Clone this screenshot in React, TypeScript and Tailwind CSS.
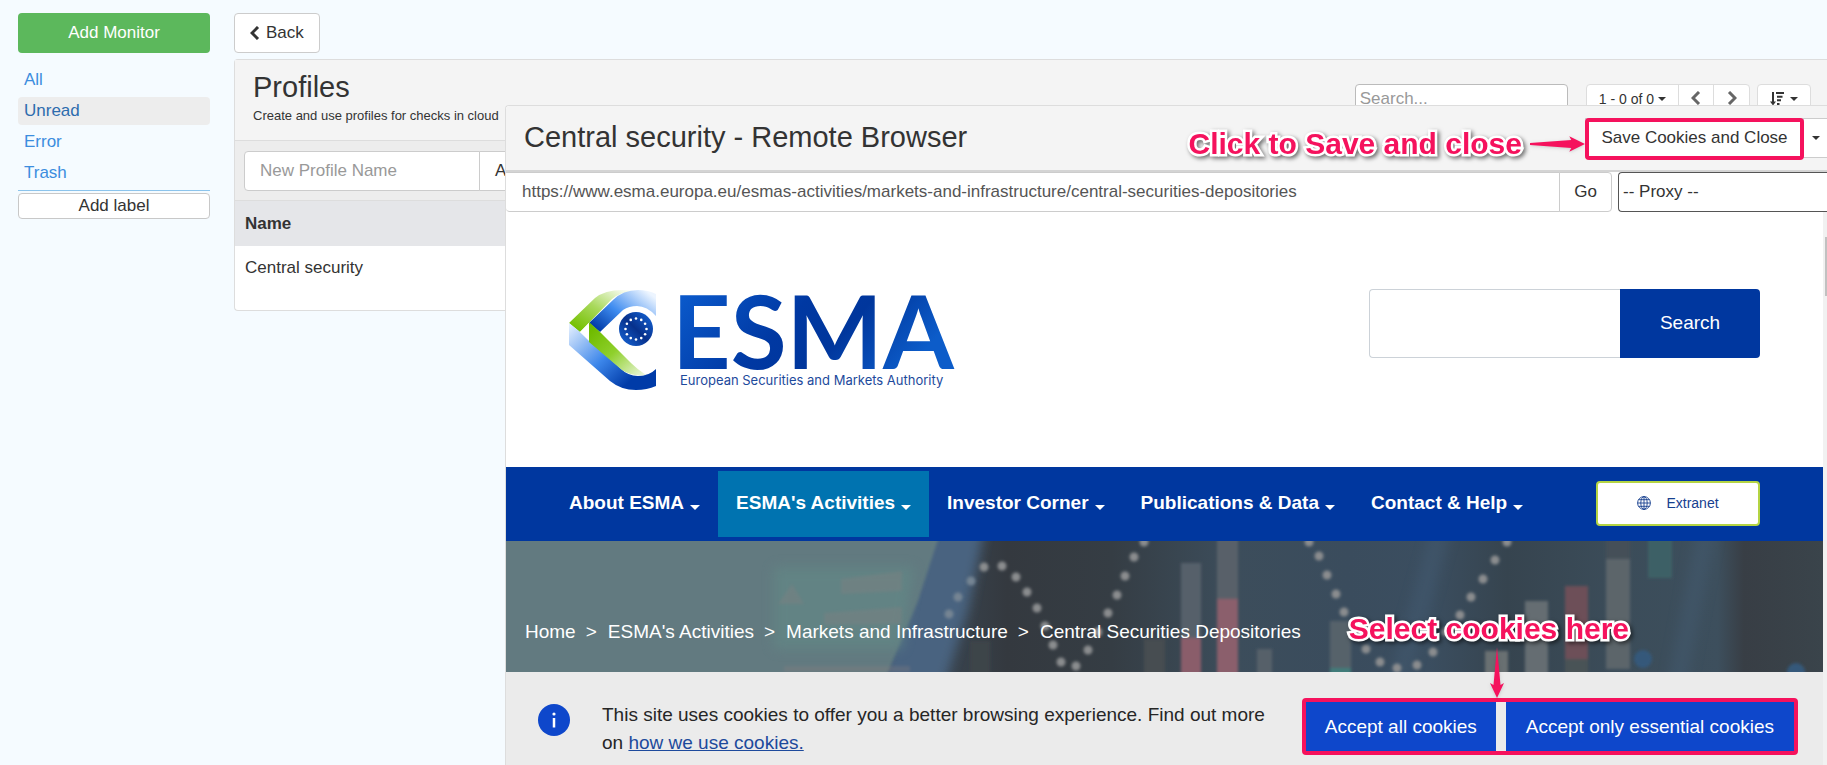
import type { ReactNode } from 'react'

const LABELS = [{ name: 'All' }, { name: 'Unread', active: true }, { name: 'Error' }, { name: 'Trash' }]

const NAV = [
  { label: 'About ESMA' },
  { label: "ESMA's Activities", active: true },
  { label: 'Investor Corner' },
  { label: 'Publications & Data' },
  { label: 'Contact & Help' },
]

const CRUMBS = ['Home', "ESMA's Activities", 'Markets and Infrastructure', 'Central Securities Depositories']

// Candlesticks behind the breadcrumb
const BARS = [
  { x: 464, y: 100, w: 20, h: 40, fill: '#3d4548' },
  { x: 638, y: 98, w: 21, h: 40, fill: '#474d51' },
  { x: 675, y: 22, w: 20, h: 75, fill: '#56616a' },
  { x: 675, y: 97, w: 20, h: 40, fill: '#8a5d6b' },
  { x: 711, y: -5, w: 21, h: 63, fill: '#586169' },
  { x: 711, y: 58, w: 21, h: 80, fill: '#8b5e6c' },
  { x: 751, y: 108, w: 15, h: 40, fill: '#566169' },
  { x: 824, y: 80, w: 21, h: 47, fill: '#56626a' },
  { x: 824, y: 127, w: 21, h: 10, fill: '#3f7c79' },
  { x: 979, y: 110, w: 23, h: 30, fill: '#696f72' },
  { x: 1019, y: 60, w: 23, h: 80, fill: '#656d72' },
  { x: 1059, y: 118, w: 23, h: 20, fill: '#485257' },
  { x: 1059, y: 45, w: 23, h: 73, fill: '#6d5059' },
  { x: 1100, y: -5, w: 24, h: 23, fill: '#445059' },
  { x: 1100, y: 18, w: 24, h: 110, fill: '#5c656a' },
  { x: 1142, y: -5, w: 24, h: 42, fill: '#3c6066' },
]

const DOTS = [
  [443, 73], [452, 56], [465, 40], [478, 26], [496, 25], [510, 36], [521, 51], [531, 67], [539, 85], [547, 104],
  [555, 121], [570, 125], [582, 109], [592, 91], [602, 72], [611, 54], [619, 35], [628, 16], [638, 1],
  [803, 1], [813, 15], [821, 34], [830, 53], [838, 71], [848, 91], [860, 108], [874, 121], [891, 127], [911, 124],
  [927, 111], [940, 91], [954, 74], [965, 56], [977, 38], [989, 19], [1001, 1],
]

const STARS = Array.from({ length: 12 }, (_, i) => (i * Math.PI) / 6)

function Caret({ className = 'w-2' }: { className?: string }) {
  return (
    <svg viewBox="0 0 8 4" className={`shrink-0 ${className}`} aria-hidden="true">
      <path d="M0 0h8L4 4z" fill="currentColor" />
    </svg>
  )
}

function Chevron({ right = false }: { right?: boolean }) {
  return (
    <svg width="10" height="14" viewBox="0 0 10 14" className="shrink-0" aria-hidden="true">
      <path d={right ? 'M2 1l6 6-6 6' : 'M8 1L2 7l6 6'} fill="none" stroke="currentColor" strokeWidth="3" />
    </svg>
  )
}

function SortIcon() {
  return (
    <svg width="14" height="14" viewBox="0 0 14 14" fill="none" stroke="currentColor" aria-hidden="true">
      <path d="M3 0v12" strokeWidth="2" />
      <path d="M0 9.500l3 4 3-4z" fill="currentColor" stroke="none" />
      <path d="M6 1h8M7 4.700h5.500M7 8.300h4M7 12h2.500" strokeWidth="2" />
    </svg>
  )
}

function GlobeIcon() {
  return (
    <svg width="14" height="14" viewBox="0 0 14 14" fill="none" stroke="currentColor" strokeWidth="0.9" aria-hidden="true">
      <circle cx="7" cy="7" r="6.400" />
      <ellipse cx="7" cy="7" rx="3.200" ry="6.400" />
      <path d="M7 0.600v12.800M0.600 7h12.800M1.500 3.700h11M1.500 10.300h11" />
    </svg>
  )
}

function EsmaLogo() {
  return (
    <svg width="390" height="104" viewBox="0 0 390 104" aria-label="ESMA" role="img" className="shrink-0 overflow-visible">
      <defs>
        <linearGradient id="word" x1="0" y1="0" x2="1" y2="0.4">
          <stop offset="0" stopColor="#0d62d6" />
          <stop offset="0.5" stopColor="#0038a2" />
          <stop offset="0.7" stopColor="#00369c" />
          <stop offset="1" stopColor="#0c5cc9" />
        </linearGradient>
        <linearGradient id="greenTop" x1="0" y1="1" x2="1" y2="0">
          <stop offset="0.1" stopColor="#74c000" />
          <stop offset="0.5" stopColor="#a9d95c" />
          <stop offset="0.9" stopColor="#f4faea" />
        </linearGradient>
        <linearGradient id="greenLow" x1="0" y1="0" x2="1" y2="1">
          <stop offset="0.1" stopColor="#6fbb00" />
          <stop offset="0.5" stopColor="#8fd02c" />
          <stop offset="1" stopColor="#f0f8e4" />
        </linearGradient>
        <linearGradient id="blueTop" x1="0" y1="1" x2="1" y2="0.2">
          <stop offset="0.1" stopColor="#003aa6" />
          <stop offset="0.5" stopColor="#3f8cf0" />
          <stop offset="1" stopColor="#edf5ff" />
        </linearGradient>
        <linearGradient id="blueLow" x1="0" y1="0" x2="1" y2="0.8">
          <stop offset="0" stopColor="#eaf3ff" />
          <stop offset="0.5" stopColor="#3c86ea" />
          <stop offset="0.85" stopColor="#003ba8" />
        </linearGradient>
        <linearGradient id="iris" x1="0" y1="1" x2="1" y2="0">
          <stop offset="0" stopColor="#1769dd" />
          <stop offset="0.5" stopColor="#07318c" />
          <stop offset="1" stopColor="#1668dc" />
        </linearGradient>
      </defs>
      <path d="M1 34L27 9Q37 1 54 1L66 2Q52 3 44 10L12 43z" fill="url(#greenTop)" />
      <path d="M21 34L45 11Q55 1 70 1Q80 1 88 5V27Q79 17 69 17Q61 17 55 21L32 43z" fill="url(#blueTop)" />
      <path d="M1 34L12 43L52 79Q60 87 70 87Q81 87 88 80V97Q79 101 68 101Q53 101 42 92L1 56z" fill="url(#blueLow)" />
      <path d="M12 43L22 33V53z" fill="#fff" />
      <path d="M21 33L32 43L63 74Q69 80 78 86Q64 88 54 81L21 53z" fill="url(#greenLow)" />
      <circle cx="68" cy="40" r="17" fill="url(#iris)" />
      {STARS.map((a) => (
        <circle key={a} cx={68 + 10.5 * Math.sin(a)} cy={40 - 10.5 * Math.cos(a)} r="1.3" fill="#fff" />
      ))}
      <text x="104" y="80" fontSize="102" fontWeight="700" fontFamily="Lato, sans-serif" fill="url(#word)">
        ESMA
      </text>
      <text x="112" y="96" fontSize="13" fontFamily="Inter, sans-serif" fill="#1d4a9c">
        European Securities and Markets Authority
      </text>
    </svg>
  )
}

function HeroArt() {
  return (
    <svg
      className="absolute inset-0 h-full w-full"
      viewBox="0 0 1317 131"
      preserveAspectRatio="xMidYMid slice"
      aria-hidden="true"
    >
      <defs>
        <linearGradient id="dusk" x1="0" x2="1317" y1="0" y2="0" gradientUnits="userSpaceOnUse">
          <stop offset="0.32" stopColor="#3a4753" />
          <stop offset="0.38" stopColor="#34393f" />
          <stop offset="0.46" stopColor="#353d44" />
          <stop offset="0.55" stopColor="#3c4d5b" />
          <stop offset="0.64" stopColor="#3a4c5d" />
          <stop offset="0.7" stopColor="#3b4e60" />
          <stop offset="0.76" stopColor="#36444f" />
          <stop offset="0.84" stopColor="#3b4c59" />
          <stop offset="0.92" stopColor="#3d4f5d" />
          <stop offset="0.94" stopColor="#383e45" />
          <stop offset="1" stopColor="#3a444b" />
        </linearGradient>
        <filter id="soft" x="-20%" y="-20%" width="140%" height="140%">
          <feGaussianBlur stdDeviation="1.5" />
        </filter>
        <filter id="softer" x="-20%" y="-20%" width="140%" height="140%">
          <feGaussianBlur stdDeviation="6" />
        </filter>
      </defs>
      <rect width="1317" height="131" fill="url(#dusk)" />
      <path d="M420 -20H480L462 70L436 150H370z" fill="#4a6480" filter="url(#softer)" />
      <path d="M-20 -20H438L412 60L374 150H-20z" fill="#627a80" filter="url(#soft)" />
      <path d="M268 26H408L396 108H268z" fill="#628a87" opacity="0.6" filter="url(#softer)" />
      <g filter="url(#soft)" opacity="0.3" fill="#8a7f80">
        <path d="M272 63L286 43L298 63z" />
        <path d="M335 38L396 30V50L335 53z" />
        <path d="M318 72L396 66V83L318 84z" />
        <path d="M278 125H404V131H278z" />
      </g>
      <g filter="url(#softer)" stroke="#466079" strokeWidth="20" opacity="0.35">
        <path d="M890 150L935 -10M1170 150L1200 -10" />
      </g>
      <g filter="url(#soft)">
        {BARS.map((b) => (
          <rect key={`${b.x}-${b.y}`} x={b.x} y={b.y} width={b.w} height={b.h} fill={b.fill} />
        ))}
        <circle cx="1137" cy="118" r="9" fill="#35597a" />
        <circle cx="1290" cy="131" r="9" fill="#35597a" />
        {DOTS.map(([x, y]) => (
          <circle key={x} cx={x} cy={y} r="4.500" fill={x < 470 ? '#748493' : '#8a8c8e'} />
        ))}
      </g>
    </svg>
  )
}

function Callout({ children }: { children: ReactNode }) {
  return (
    <span className="whitespace-nowrap text-[30px] leading-9 font-bold text-[#f5125d] [-webkit-text-stroke:5px_white] [paint-order:stroke_fill] drop-shadow-[2px_2px_2px_rgba(0,0,0,0.55)]">
      {children}
    </span>
  )
}

function Sidebar() {
  return (
    <aside className="w-48 shrink-0">
      <button className="h-10 w-full rounded bg-[#5cb85c] text-white">Add Monitor</button>
      <nav className="mt-[13px] flex flex-col gap-[3px] border-b border-[#8cc4ec] pb-[3px]">
        {LABELS.map((l) => (
          <a
            key={l.name}
            href="#"
            className={`h-7 rounded px-1.5 leading-7 ${l.active ? 'bg-[#ededed] text-[#2d6cae]' : 'text-[#3c8dde]'}`}
          >
            {l.name}
          </a>
        ))}
      </nav>
      <button className="mt-0.5 h-[26px] w-full rounded border border-[#c8c8c8] bg-white leading-6">Add label</button>
    </aside>
  )
}

function ProfilesPanel() {
  return (
    <section className="mt-1.5 rounded-l border border-r-0 border-[#ddd] bg-white">
      <header className="flex justify-between border-b border-[#ddd] bg-[#f4f4f4] pr-4 pl-[18px]">
        <div className="pt-2.5 pb-3">
          <h1 className="text-[29px] leading-[34px]">Profiles</h1>
          <p className="text-[13px] leading-6">Create and use profiles for checks in cloud</p>
        </div>
        <div className="flex items-start pt-6 text-sm">
          <input
            aria-label="Search"
            placeholder="Search..."
            className="mr-[18px] h-[30px] w-[213px] rounded border border-[#bbb] bg-white px-1 text-[17px] placeholder:text-[#999]"
          />
          <div className="mr-[7px] flex h-[30px] divide-x divide-[#ddd] rounded border border-[#ddd] bg-white">
            <button className="flex items-center gap-1 px-3">
              1 - 0 of 0 <Caret />
            </button>
            <button aria-label="Previous page" className="grid w-[35px] place-items-center pb-0.5 text-[#666]">
              <Chevron />
            </button>
            <button aria-label="Next page" className="grid w-[35px] place-items-center pb-0.5 text-[#666]">
              <Chevron right />
            </button>
          </div>
          <button aria-label="Sort" className="flex h-[30px] items-center gap-1.5 rounded border border-[#ddd] bg-white px-3">
            <SortIcon />
            <Caret />
          </button>
        </div>
      </header>
      <form className="flex border-b border-[#ddd] bg-[#ededed] p-[9px] pt-2.5">
        <input
          aria-label="New Profile Name"
          placeholder="New Profile Name"
          className="h-10 w-[236px] rounded-l border border-[#ccc] bg-white px-[15px] placeholder:text-[#999]"
        />
        <button type="button" className="-ml-px h-10 rounded-r border border-[#ccc] bg-white px-[15px]">
          Add
        </button>
      </form>
      <table className="w-full text-left">
        <thead>
          <tr className="h-[45px] bg-[#e5e6e9]">
            <th className="px-2.5">Name</th>
          </tr>
        </thead>
        <tbody>
          <tr className="h-16 align-top">
            <td className="px-2.5 pt-2.5">Central security</td>
          </tr>
        </tbody>
      </table>
    </section>
  )
}

function SiteHeader() {
  return (
    <div className="flex items-start justify-between pt-[77px] pr-[63px] pb-[74px] pl-[62px]">
      <EsmaLogo />
      <form className="flex h-[69px] text-[19px]">
        <input aria-label="Search site" className="w-[251px] rounded-l border border-r-0 border-[#ccd2d8] px-4" />
        <button type="button" className="w-[140px] rounded-r bg-[#00379f] pb-0.5 text-white">
          Search
        </button>
      </form>
    </div>
  )
}

function SiteNav() {
  return (
    <nav className="flex h-[74px] items-center justify-between bg-[#00379f] pr-[63px] pl-[45px] text-[19px] font-bold text-white">
      <div className="flex">
        {NAV.map((n) => (
          <a
            key={n.label}
            href="#"
            className={`flex h-[66px] items-center gap-1.5 px-[18px] pb-0.5 ${n.active ? 'bg-[#0073b0]' : ''}`}
          >
            {n.label}
            <Caret className="mt-2 w-2.5" />
          </a>
        ))}
      </div>
      <a
        href="#"
        className="mb-0.5 flex h-[45px] w-[164px] items-center justify-center gap-[15px] rounded border-2 border-[#b4d443] bg-white text-sm font-normal text-[#16408f]"
      >
        <GlobeIcon />
        Extranet
      </a>
    </nav>
  )
}

function CookieBanner() {
  return (
    <div className="flex flex-1 items-start bg-[#ebebeb] pt-[29px] pr-[29px] pb-4 pl-8 text-[19px] leading-7">
      <svg width="32" height="32" viewBox="0 0 32 32" className="mt-[3px] mr-8 shrink-0" aria-hidden="true">
        <circle cx="16" cy="16" r="16" fill="#0e47cb" />
        <path d="M16 14v9.500" stroke="#fff" strokeWidth="2.500" />
        <circle cx="16" cy="10" r="1.600" fill="#fff" />
      </svg>
      <p className="flex-1 text-[#262626]">
        This site uses cookies to offer you a better browsing experience. Find out more on{' '}
        <a href="#" className="text-[#1d4a9c] underline">
          how we use cookies.
        </a>
      </p>
      <div className="relative mt-px ml-5 flex shrink-0 gap-2.5">
        <button className="h-[49px] bg-[#0e47cb] px-[19px] text-white">Accept all cookies</button>
        <button className="h-[49px] bg-[#0e47cb] px-5 text-white">Accept only essential cookies</button>
        <div className="pointer-events-none absolute -inset-1 rounded-sm border-4 border-[#f5125d]" />
        <div className="absolute right-[165px] bottom-full mb-1 flex flex-col items-center">
          <Callout>Select cookies here</Callout>
          <svg width="14" height="51" viewBox="0 0 14 51" className="ml-4 drop-shadow" aria-hidden="true">
            <path d="M7 0L10.500 38L14 36L7 51L0 36L3.500 38z" fill="#f5125d" />
          </svg>
        </div>
      </div>
    </div>
  )
}

function RemoteBrowser() {
  return (
    <section className="absolute top-[105px] right-0 bottom-0 left-[505px] flex flex-col rounded-tl border-t border-l border-[#ddd] bg-white">
      <header className="flex h-[66px] shrink-0 items-start justify-between rounded-tl border-b-2 border-[#d4d4d4] bg-[#f4f4f4] pt-3 pl-[18px]">
        <h2 className="text-[29px] leading-[38px]">Central security - Remote Browser</h2>
        <div className="relative flex">
          <div className="absolute top-1.5 right-full flex h-10 items-center gap-2">
            <Callout>Click to Save and close</Callout>
            <svg width="55" height="16" viewBox="0 0 56 16" className="drop-shadow" aria-hidden="true">
              <path d="M0 7L42 4L40 0L56 8L40 16L42 12L0 9z" fill="#f5125d" />
            </svg>
          </div>
          <div className="relative">
            <button className="h-10 w-[219px] border border-[#ccc] bg-white">Save Cookies and Close</button>
            <div className="pointer-events-none absolute inset-x-0 top-0 -bottom-0.5 rounded-sm border-4 border-[#f5125d]" />
          </div>
          <button aria-label="More options" className="grid h-10 w-[23px] place-items-center border-y border-[#ccc] bg-white">
            <Caret />
          </button>
        </div>
      </header>
      <form className="flex h-10 shrink-0">
        <input
          aria-label="Address"
          defaultValue="https://www.esma.europa.eu/esmas-activities/markets-and-infrastructure/central-securities-depositories"
          className="min-w-0 flex-1 rounded-bl border border-l-0 border-[#ccc] px-4 text-[#555]"
        />
        <button type="button" className="-ml-px w-[53px] rounded-r border border-[#ccc] bg-white">
          Go
        </button>
        <select
          aria-label="Proxy"
          className="ml-1.5 w-[209px] appearance-none rounded-l-sm border border-r-0 border-[#555] bg-white pl-1"
        >
          <option>-- Proxy --</option>
        </select>
      </form>
      <div className="flex flex-1">
        <div className="flex min-w-0 flex-1 flex-col">
          <SiteHeader />
          <SiteNav />
          <div className="relative h-[131px] shrink-0 overflow-hidden bg-[#3a444b]">
            <HeroArt />
            <ol className="relative flex gap-2.5 pt-[77px] pl-[19px] text-[19px] leading-7 text-white">
              {CRUMBS.map((c, i) => (
                <li key={c} className="flex gap-[11px]">
                  {i > 0 && <span>&gt;</span>}
                  <a href="#">{c}</a>
                </li>
              ))}
            </ol>
          </div>
          <CookieBanner />
        </div>
        <div className="w-1 shrink-0 bg-[#f1f1f1] pt-[25px]">
          <div className="ml-auto h-[59px] w-0.5 bg-[#c1c1c1]" />
        </div>
      </div>
    </section>
  )
}

export default function App() {
  return (
    <div className="relative min-h-screen overflow-hidden bg-[#f5fbff] font-['Liberation_Sans',Arial,sans-serif] text-[17px] leading-6 text-[#333]">
      <div className="flex gap-6 pt-[13px] pl-[18px]">
        <Sidebar />
        <main className="min-w-0 flex-1">
          <button className="flex h-10 items-center gap-1.5 rounded border border-[#ccc] bg-white px-[15px]">
            <Chevron />
            Back
          </button>
          <ProfilesPanel />
        </main>
      </div>
      <RemoteBrowser />
    </div>
  )
}
